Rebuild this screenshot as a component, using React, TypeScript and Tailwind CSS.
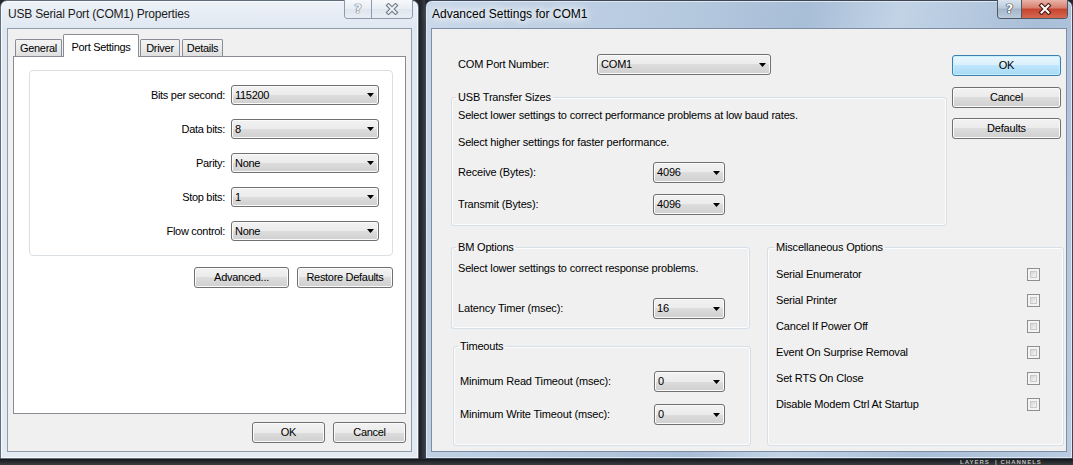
import React from "react";

// Win7 style combo arrow
function Arrow() {
  return (
    <svg width="7" height="4" viewBox="0 0 7 4" className="shrink-0">
      <path d="M0 0h7L3.5 4z" fill="#000" />
    </svg>
  );
}

function Combo({ value, className }: { value: string; className: string }) {
  return (
    <div
      className={`flex items-center justify-between border border-[#707070] rounded-[3px] bg-[linear-gradient(#f2f2f2,#ebebeb_50%,#dddddd_50%,#cfcfcf)] shadow-[inset_0_0_0_1px_#fbfbfb] pl-[3px] pr-[4px] ${className}`}
    >
      <span className="leading-none">{value}</span>
      <Arrow />
    </div>
  );
}

function Btn({ label, className }: { label: string; className: string }) {
  return (
    <div
      className={`flex items-center justify-center border border-[#707070] rounded-[3px] bg-[linear-gradient(#f2f2f2,#ebebeb_50%,#dddddd_50%,#cfcfcf)] shadow-[inset_0_0_0_1px_#fbfbfb] leading-none ${className}`}
    >
      {label}
    </div>
  );
}

function Group({ title, className, children }: { title: string; className: string; children: React.ReactNode }) {
  return (
    <fieldset className={`border border-[#d5dfe5] rounded-[3px] shadow-[inset_0_0_0_1px_#fbfcfd] ${className}`}>
      <legend className="-ml-[2px] px-[2px] leading-[14px]">{title}</legend>
      {children}
    </fieldset>
  );
}

function Check() {
  return (
    <div className="w-[13px] h-[13px] border border-[#8e8f8f] bg-[#f4f4f4] p-[2px] shrink-0">
      <div className="w-full h-full border border-[#c9c9c9] bg-[linear-gradient(135deg,#d3d6da,#f5f5f5)]" />
    </div>
  );
}

function CloseGlyph({ active }: { active: boolean }) {
  return (
    <svg width="14" height="12" viewBox="0 0 14 12">
      <path d="M3.5 2.5 L10.5 9.5 M10.5 2.5 L3.5 9.5" stroke={active ? "#4a1710" : "#6d7987"} strokeWidth="4.2" strokeLinecap="square" />
      <path d="M3.5 2.5 L10.5 9.5 M10.5 2.5 L3.5 9.5" stroke={active ? "#ffffff" : "#eef2f6"} strokeWidth="2" strokeLinecap="square" />
    </svg>
  );
}

function Caption({ active, helpW, closeW }: { active: boolean; helpW: string; closeW: string }) {
  return (
    <div
      className={`flex h-[19px] -mt-[1px] -mr-[1px] rounded-b-[4px] overflow-hidden border border-t-0 ${active ? "border-[#4c5868]" : "border-[#8d9aab]"}`}
    >
      <div
        className={`${helpW} flex items-center justify-center border-r font-['DejaVu_Sans',sans-serif] font-bold text-[13px] ${
          active
            ? "border-[#4c5868] bg-[linear-gradient(#d9e3ee,#bccbdc_45%,#a3b6cb_50%,#bccbdb)] text-white [text-shadow:0_0_1px_#222,0_0_1px_#222,0_0_1px_#222]"
            : "border-[#8d9aab] bg-[linear-gradient(#f6f8fb,#e8eef4_50%,#dfe6ee_50%,#e9eef4)] text-[#f2f5f8] [text-shadow:0_0_1px_#5f6b79,0_0_1px_#5f6b79,0_0_1px_#5f6b79]"
        }`}
      >
        ?
      </div>
      <div
        className={`${closeW} flex items-center justify-center ${
          active
            ? "bg-[linear-gradient(#eab3a8,#d57e6c_45%,#c5432e_50%,#d6684f)]"
            : "bg-[linear-gradient(#f6f8fb,#e8eef4_50%,#dfe6ee_50%,#e9eef4)]"
        }`}
      >
        <CloseGlyph active={active} />
      </div>
    </div>
  );
}

function Tab({ label, active, className }: { label: string; active?: boolean; className: string }) {
  if (active) {
    return (
      <div className={`h-[23px] -mb-[1px] z-10 bg-white border border-b-0 border-[#898c95] rounded-t-[2px] flex justify-center pt-[4px] ${className}`}>
        {label}
      </div>
    );
  }
  return (
    <div className={`h-[17px] border border-b-0 border-[#898c95] rounded-t-[2px] bg-[linear-gradient(#f3f3f3,#ebebeb_50%,#dedede)] flex items-center justify-center pt-[1px] ${className}`}>
      {label}
    </div>
  );
}

const leftRows = [
  { label: "Bits per second:", value: "115200" },
  { label: "Data bits:", value: "8" },
  { label: "Parity:", value: "None" },
  { label: "Stop bits:", value: "1" },
  { label: "Flow control:", value: "None" },
];

const miscRows = [
  "Serial Enumerator",
  "Serial Printer",
  "Cancel If Power Off",
  "Event On Surprise Removal",
  "Set RTS On Close",
  "Disable Modem Ctrl At Startup",
];

export default function App() {
  return (
    <div className="w-[1073px] h-[465px] overflow-hidden bg-[#23272c] flex flex-col font-['Liberation_Sans',Arial,sans-serif] text-black">
      <div className="flex h-[459px] shrink-0">
        {/* ─── Properties window (inactive) ─── */}
        <div className="w-[419px] h-[459px] flex flex-col rounded-t-[7px] border border-[#5f6d7d] bg-[linear-gradient(#edf2f8,#dfe7f1_28px,#e3eaf2)] shadow-[inset_0_0_0_1px_#f7f9fc] px-[6px] pb-[6px]">
          <div className="h-[27px] flex items-start justify-between shrink-0">
            <span className="pl-[1px] pt-[6px] text-[12px] leading-[14px] tracking-[-0.2px] text-[#1c1c1c]">
              USB Serial Port (COM1) Properties
            </span>
            <Caption active={false} helpW="w-[27px]" closeW="w-[40px]" />
          </div>
          <div className="flex-1 border border-[#8f9cab] bg-[#f0f0f0] flex flex-col text-[11px] tracking-[-0.3px]">
            <div className="h-[27px] flex items-end pl-[7px] gap-[1px] shrink-0">
              <Tab label="General" className="w-[47px]" />
              <Tab label="Port Settings" active className="w-[76px]" />
              <Tab label="Driver" className="w-[40px]" />
              <Tab label="Details" className="w-[41px] ml-[1px]" />
            </div>
            <div className="mx-[5px] h-[358px] border border-[#898c95] bg-white shrink-0 pl-[15px] pr-[12px] pt-[13px]">
              <div className="h-[186px] border border-[#dadfe4] rounded-[4px] flex flex-col gap-[14px] pt-[14px] pr-[13px]">
                {leftRows.map((r) => (
                  <div key={r.label} className="flex items-center justify-end h-[20px]">
                    <span className="mr-[6px]">{r.label}</span>
                    <Combo value={r.value} className="w-[148px] h-[20px]" />
                  </div>
                ))}
              </div>
              <div className="flex justify-end gap-[8px] mt-[11px]">
                <Btn label="Advanced..." className="w-[95px] h-[21px]" />
                <Btn label="Restore Defaults" className="w-[96px] h-[21px]" />
              </div>
            </div>
            <div className="flex justify-end gap-[8px] mt-[8px] pr-[5px]">
              <Btn label="OK" className="w-[73px] h-[21px]" />
              <Btn label="Cancel" className="w-[73px] h-[21px]" />
            </div>
          </div>
        </div>

        <div className="w-[6px] bg-[linear-gradient(90deg,#1b1e22,#3a3f46)]" />

        {/* ─── Advanced settings window (active) ─── */}
        <div className="w-[648px] h-[459px] flex flex-col rounded-t-[7px] border border-[#3c4654] bg-[linear-gradient(105deg,#c9d8ea_0%,#b4c8de_35%,#a8bed7_50%,#c2d3e6_62%,#a9bfd8_80%,#b8cbe0_100%)] shadow-[inset_0_0_0_1px_#dfe8f2] px-[5px] pb-[6px]">
          <div className="h-[27px] flex items-start justify-between shrink-0">
            <span className="pl-[1px] pt-[6px] text-[12px] leading-[14px] [text-shadow:0_0_6px_#fff,0_0_10px_#fff,0_0_14px_#fff]">
              Advanced Settings for COM1
            </span>
            <Caption active helpW="w-[24px]" closeW="w-[45px]" />
          </div>
          <div className="flex-1 border border-[#7d8ea3] bg-[#f0f0f0] pl-[19px] text-[11px] tracking-[-0.18px]">
            <div className="flex">
              <div className="w-[496px] pt-[25px]">
                <div className="flex items-center h-[21px] pl-[7px]">
                  <span className="w-[139px]">COM Port Number:</span>
                  <Combo value="COM1" className="w-[174px] h-[21px]" />
                </div>
                <Group title="USB Transfer Sizes" className="mt-[15px] w-[496px] pl-[6px] pb-[10px]">
                  <p className="mt-[4px] leading-[14px]">Select lower settings to correct performance problems at low baud rates.</p>
                  <p className="mt-[13px] leading-[14px]">Select higher settings for faster performance.</p>
                  <div className="flex items-center h-[21px] mt-[13px]">
                    <span className="w-[195px]">Receive (Bytes):</span>
                    <Combo value="4096" className="w-[72px] h-[21px]" />
                  </div>
                  <div className="flex items-center h-[21px] mt-[11px]">
                    <span className="w-[195px]">Transmit (Bytes):</span>
                    <Combo value="4096" className="w-[72px] h-[21px]" />
                  </div>
                </Group>
              </div>
              <div className="ml-[5px] pt-[26px] w-[109px] flex flex-col">
                <div className="h-[21px] flex items-center justify-center border border-[#3c7fb1] rounded-[3px] bg-[linear-gradient(#eaf6fd,#d9f0fc_50%,#bee6fd_50%,#a7d9f5)] shadow-[inset_0_0_0_1px_#c4f1ff] leading-none">
                  OK
                </div>
                <Btn label="Cancel" className="h-[21px] mt-[11px]" />
                <Btn label="Defaults" className="h-[21px] mt-[10px]" />
              </div>
            </div>

            <div className="flex mt-[14px]">
              <div className="w-[299px]">
                <Group title="BM Options" className="w-[299px] pl-[6px] pb-[9px]">
                  <p className="mt-[7px] leading-[14px]">Select lower settings to correct response problems.</p>
                  <div className="flex items-center h-[21px] mt-[23px]">
                    <span className="w-[195px]">Latency Timer (msec):</span>
                    <Combo value="16" className="w-[72px] h-[21px]" />
                  </div>
                </Group>
                <Group title="Timeouts" className="mt-[10px] ml-[2px] w-[298px] pl-[6px] pb-[20px]">
                  <div className="flex items-center h-[21px] mt-[18px]">
                    <span className="w-[194px]">Minimum Read Timeout (msec):</span>
                    <Combo value="0" className="w-[71px] h-[21px]" />
                  </div>
                  <div className="flex items-center h-[21px] mt-[12px]">
                    <span className="w-[194px]">Minimum Write Timeout (msec):</span>
                    <Combo value="0" className="w-[71px] h-[21px]" />
                  </div>
                </Group>
              </div>
              <Group title="Miscellaneous Options" className="ml-[17px] w-[297px] pl-[8px] pr-[23px] pb-[33px]">
                <div className="mt-[13px] flex flex-col gap-[12px]">
                  {miscRows.map((m) => (
                    <div key={m} className="flex items-center justify-between h-[14px]">
                      <span className="leading-[14px]">{m}</span>
                      <Check />
                    </div>
                  ))}
                </div>
              </Group>
            </div>
          </div>
        </div>
      </div>

      <div className="flex-1 flex bg-[linear-gradient(#15181b,#3a3d41)]">
        <div className="ml-[960px] text-[6px] font-bold tracking-[1px] text-[#bdbdbd] leading-[6px] whitespace-nowrap">
          LAYERS &nbsp;| CHANNELS
        </div>
      </div>
    </div>
  );
}
